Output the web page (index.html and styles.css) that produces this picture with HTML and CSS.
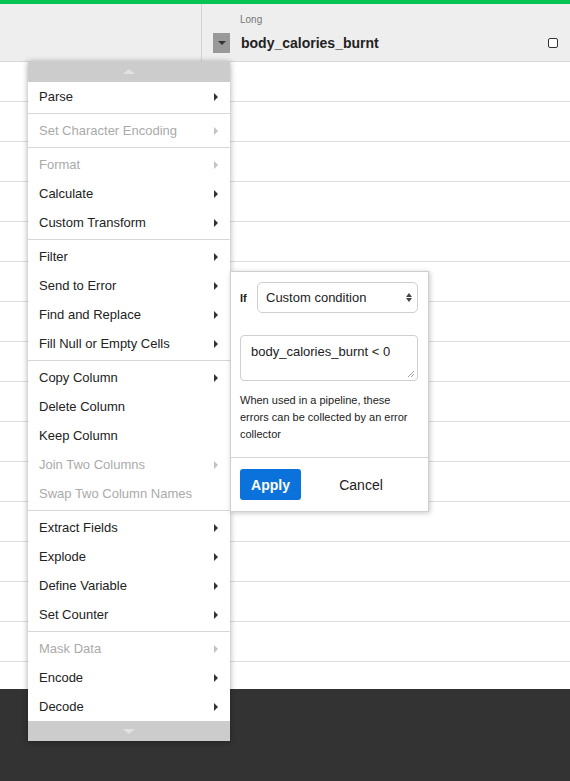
FILE: index.html
```html
<!DOCTYPE html>
<html>
<head>
<meta charset="utf-8">
<link rel="stylesheet" href="styles.css">
</head>
<body>
<div class="page">
  <div class="topbar"></div>
  <div class="header">
    <div class="hcol first"></div>
    <div class="hcol second">
      <div class="htype">Long</div>
      <div class="hname-row">
        <span class="toggle"><span class="tri-down"></span></span>
        <span class="hname">body_calories_burnt</span>
        <span class="check"></span>
      </div>
    </div>
  </div>
  <div class="grid">
    <div class="row"></div><div class="row"></div><div class="row"></div><div class="row"></div><div class="row"></div>
    <div class="row"></div><div class="row"></div><div class="row"></div><div class="row"></div><div class="row"></div>
    <div class="row"></div><div class="row"></div><div class="row"></div><div class="row"></div><div class="row"></div>
  </div>
  <div class="gap"></div>
  <div class="footer"></div>

  <div class="menu">
    <div class="scroll top"><span class="tri-up"></span></div>
    <div class="item"><span>Parse</span><span class="arrow"></span></div>
    <div class="sep"></div>
    <div class="item disabled"><span>Set Character Encoding</span><span class="arrow"></span></div>
    <div class="sep"></div>
    <div class="item disabled"><span>Format</span><span class="arrow"></span></div>
    <div class="item"><span>Calculate</span><span class="arrow"></span></div>
    <div class="item"><span>Custom Transform</span><span class="arrow"></span></div>
    <div class="sep"></div>
    <div class="item"><span>Filter</span><span class="arrow"></span></div>
    <div class="item"><span>Send to Error</span><span class="arrow"></span></div>
    <div class="item"><span>Find and Replace</span><span class="arrow"></span></div>
    <div class="item"><span>Fill Null or Empty Cells</span><span class="arrow"></span></div>
    <div class="sep"></div>
    <div class="item"><span>Copy Column</span><span class="arrow"></span></div>
    <div class="item"><span>Delete Column</span></div>
    <div class="item"><span>Keep Column</span></div>
    <div class="item disabled"><span>Join Two Columns</span><span class="arrow"></span></div>
    <div class="item disabled"><span>Swap Two Column Names</span></div>
    <div class="sep"></div>
    <div class="item"><span>Extract Fields</span><span class="arrow"></span></div>
    <div class="item"><span>Explode</span><span class="arrow"></span></div>
    <div class="item"><span>Define Variable</span><span class="arrow"></span></div>
    <div class="item"><span>Set Counter</span><span class="arrow"></span></div>
    <div class="sep"></div>
    <div class="item disabled"><span>Mask Data</span><span class="arrow"></span></div>
    <div class="item"><span>Encode</span><span class="arrow"></span></div>
    <div class="item"><span>Decode</span><span class="arrow"></span></div>
    <div class="scroll"><span class="tri-down light"></span></div>
  </div>

  <div class="popup">
    <div class="pbody">
      <div class="cond-row">
        <span class="iflabel">If</span>
        <div class="select">
          <span>Custom condition</span>
          <span class="updown"><span class="ua"></span><span class="da"></span></span>
        </div>
      </div>
      <div class="textarea">
        <span>body_calories_burnt &lt; 0</span>
        <svg class="grip" width="8" height="8" viewBox="0 0 8 8"><path d="M1 7L7 1M4 7L7 4" stroke="#888" stroke-width="0.8"/></svg>
      </div>
      <div class="help">When used in a pipeline, these errors can be collected by an error collector</div>
    </div>
    <div class="pfoot">
      <span class="apply">Apply</span>
      <span class="cancel">Cancel</span>
    </div>
  </div>
</div>
</body>
</html>
```
FILE: styles.css
```css
* { box-sizing: border-box; }
html, body { margin: 0; padding: 0; }
body {
  font-family: "Liberation Sans", Arial, sans-serif;
  background: #ffffff;
  color: #222;
}
.page {
  position: relative;
  width: 570px;
  height: 781px;
  overflow: hidden;
}
.topbar {
  height: 4px;
  background: #05c452;
}
.header {
  display: flex;
  height: 58px;
  background: #eeeeee;
  border-bottom: 1px solid #d6d6d6;
}
.hcol.first {
  width: 202px;
  border-right: 1px solid #d4d4d4;
}
.hcol.second {
  flex: 1;
  display: flex;
  flex-direction: column;
  padding-left: 11px;
  padding-right: 12px;
}
.htype {
  font-size: 10px;
  color: #777;
  padding-left: 27px;
  margin-top: 10px;
  height: 12px;
  line-height: 12px;
}
.hname-row {
  display: flex;
  align-items: center;
  margin-top: 7px;
  height: 20px;
}
.toggle {
  width: 17px;
  height: 20px;
  background: #999999;
  display: flex;
  align-items: center;
  justify-content: center;
}
.tri-down {
  width: 0; height: 0;
  border-left: 4px solid transparent;
  border-right: 4px solid transparent;
  border-top: 4px solid #333;
}
.tri-down.light { border-top-color: #e2e2e2; border-left-width: 6px; border-right-width: 6px; border-top-width: 5px; }
.tri-up {
  width: 0; height: 0;
  border-left: 6px solid transparent;
  border-right: 6px solid transparent;
  border-bottom: 5px solid #e2e2e2;
}
.hname {
  margin-left: 11px;
  font-size: 14px;
  font-weight: bold;
  color: #222;
  flex: 1;
}
.check {
  width: 10px;
  height: 10px;
  border: 1px solid #333;
  border-radius: 2px;
  background: #fff;
}
.grid .row {
  height: 40px;
  border-bottom: 1px solid #dddddd;
}
.gap { height: 27px; }
.footer {
  height: 92px;
  background: #333333;
}
.menu {
  position: absolute;
  left: 28px;
  top: 61px;
  width: 202px;
  background: #fff;
  box-shadow: 0 1px 6px rgba(0,0,0,0.35);
  display: flex;
  flex-direction: column;
}
.scroll {
  height: 20px;
  background: #cccccc;
  display: flex;
  align-items: center;
  justify-content: center;
}
.scroll.top { height: 21px; }
.item {
  height: 29px;
  display: flex;
  align-items: center;
  justify-content: space-between;
  padding: 0 12px 0 11px;
  font-size: 13px;
  color: #222;
}
.item.disabled { color: #aaaaaa; }
.arrow {
  width: 0; height: 0;
  border-top: 4px solid transparent;
  border-bottom: 4px solid transparent;
  border-left: 4px solid #333;
}
.item.disabled .arrow { border-left-color: #c2c2c2; }
.sep {
  height: 1px;
  background: #d8d8d8;
  margin: 2px 0;
}
.popup {
  position: absolute;
  left: 230px;
  top: 271px;
  width: 199px;
  height: 241px;
  background: #fff;
  border: 1px solid #cfcfcf;
  box-shadow: 1px 1px 5px rgba(0,0,0,0.22);
  display: flex;
  flex-direction: column;
}
.pbody {
  padding: 10px 10px 0 9px;
  height: 186px;
  border-bottom: 1px solid #d4d4d4;
}
.cond-row {
  display: flex;
  align-items: center;
}
.iflabel {
  font-size: 11px;
  font-weight: bold;
  width: 17px;
  color: #222;
}
.select {
  flex: 1;
  height: 31px;
  border: 1px solid #cfcfcf;
  border-radius: 5px;
  display: flex;
  align-items: center;
  justify-content: space-between;
  padding: 0 5px 0 8px;
  font-size: 13px;
  color: #222;
}
.updown {
  display: flex;
  flex-direction: column;
  gap: 1px;
}
.ua {
  width: 0; height: 0;
  border-left: 3px solid transparent;
  border-right: 3px solid transparent;
  border-bottom: 4px solid #444;
}
.da {
  width: 0; height: 0;
  border-left: 3px solid transparent;
  border-right: 3px solid transparent;
  border-top: 4px solid #444;
}
.textarea {
  position: relative;
  margin-top: 22px;
  height: 46px;
  border: 1px solid #cfcfcf;
  border-radius: 4px;
  padding: 8px 10px;
  font-size: 13px;
  color: #222;
}
.grip {
  position: absolute;
  right: 2px;
  bottom: 2px;
}
.help {
  margin-top: 11px;
  font-size: 11px;
  line-height: 17px;
  color: #222;
}
.pfoot {
  flex: 1;
  display: flex;
  align-items: center;
  padding: 0 9px;
}
.apply {
  width: 61px;
  height: 31px;
  background: #0b72dc;
  color: #fff;
  border-radius: 3px;
  font-size: 14px;
  font-weight: bold;
  display: flex;
  align-items: center;
  justify-content: center;
}
.cancel {
  flex: 1;
  text-align: center;
  font-size: 14px;
  color: #222;
  padding-left: 2px;
}
```
